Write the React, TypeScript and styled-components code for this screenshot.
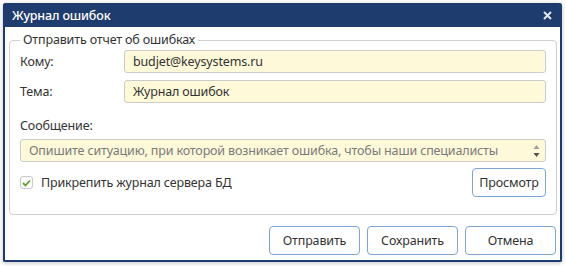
import React from "react";
import styled, { createGlobalStyle } from "styled-components";

const Global = createGlobalStyle`
  html, body { margin: 0; padding: 0; background: #ffffff; }
  body { font-family: "Noto Sans", "Open Sans", sans-serif; font-size: 12.5px; letter-spacing: -0.15px; color: #333; }
  * { box-sizing: border-box; }
`;

const Page = styled.div`
  padding: 3px 4px 4px 3px;
`;

const Window = styled.div`
  width: 559px;
  height: 259px;
  border: 2px solid #1f3c6e;
  border-top: none;
  border-radius: 3px 3px 2px 2px;
  box-shadow: 0 1px 4px rgba(0, 0, 0, 0.25);
  display: flex;
  flex-direction: column;
  background: #fff;
`;

const TitleBar = styled.div`
  height: 24px;
  background: #1f3c6e;
  color: #fff;
  display: flex;
  align-items: center;
  justify-content: space-between;
  padding: 0 10px 0 7px;
  margin: 0 -2px;
  border-radius: 3px 3px 0 0;
  font-size: 12.5px;
  font-weight: 500;
`;

const Title = styled.span`
  padding-left: 2px;
`;

const Close = styled.svg`
  width: 9px;
  height: 9px;
`;

const Body = styled.div`
  flex: 1;
  display: flex;
  flex-direction: column;
  padding: 5px 3px 5px 4px;
`;

const FieldSet = styled.fieldset`
  margin: 0;
  border: 1px solid #cfcfcf;
  border-radius: 4px;
  padding: 2px 10px 0 10px;
  height: 183px;
  display: flex;
  flex-direction: column;
`;

const Legend = styled.legend`
  padding: 0 3px;
  margin-left: 0px;
  color: #333;
  line-height: 16px;
`;

const Row = styled.div`
  display: grid;
  grid-template-columns: 104px 1fr;
  align-items: center;
  margin-bottom: 7px;
`;

const Label = styled.label`
  color: #333;
`;

const Input = styled.div<{ $placeholder?: boolean }>`
  height: 23px;
  background: #fef9d9;
  border: 1px solid #cccccc;
  border-radius: 3px;
  padding: 0 8px;
  display: flex;
  align-items: center;
  color: ${(p) => (p.$placeholder ? "#7a7a7a" : "#333")};
  position: relative;
  white-space: nowrap;
  overflow: hidden;
`;

const MsgLabel = styled.div`
  margin-top: 8px;
  margin-bottom: 5px;
  line-height: 16px;
`;

const Spinner = styled.svg`
  position: absolute;
  right: 5px;
  top: 4px;
  width: 7px;
  height: 14px;
`;

const CheckRow = styled.div`
  display: flex;
  align-items: center;
  justify-content: space-between;
  margin-top: 6px;
`;

const CheckLabel = styled.label`
  display: flex;
  align-items: center;
  gap: 8px;
  color: #333;
`;

const Box = styled.span`
  width: 13px;
  height: 13px;
  border: 1px solid #c8c8c8;
  border-radius: 3px;
  background: #fff;
  display: inline-flex;
  align-items: center;
  justify-content: center;
`;

const Button = styled.button<{ $w: number }>`
  width: ${(p) => p.$w}px;
  height: 29px;
  border: 1px solid #7ea5d3;
  border-radius: 4px;
  background: #fff;
  color: #333;
  font-family: inherit;
  font-size: 12.5px;
  letter-spacing: -0.15px;
  padding: 0;
`;

const Footer = styled.div`
  display: flex;
  justify-content: flex-end;
  gap: 7px;
  padding-right: 1px;
  margin-top: 11px;
`;

export default function App() {
  return (
    <>
      <Global />
      <Page>
        <Window>
          <TitleBar>
            <Title>Журнал ошибок</Title>
            <Close viewBox="0 0 9 9">
              <path d="M1 1 L8 8 M8 1 L1 8" stroke="#dfe6f0" strokeWidth="2" />
            </Close>
          </TitleBar>
          <Body>
            <FieldSet>
              <Legend>Отправить отчет об ошибках</Legend>
              <Row>
                <Label>Кому:</Label>
                <Input>budjet@keysystems.ru</Input>
              </Row>
              <Row>
                <Label>Тема:</Label>
                <Input>Журнал ошибок</Input>
              </Row>
              <MsgLabel>Сообщение:</MsgLabel>
              <Input $placeholder>
                Опишите ситуацию, при которой возникает ошибка, чтобы наши специалисты
                <Spinner viewBox="0 0 7 14">
                  <path d="M0.5 5 L3.5 1 L6.5 5 Z" fill="#a0a0a0" />
                  <path d="M0.5 9 L3.5 13 L6.5 9 Z" fill="#505050" />
                </Spinner>
              </Input>
              <CheckRow>
                <CheckLabel>
                  <Box>
                    <svg width="9" height="8" viewBox="0 0 9 8">
                      <path d="M1 4 L3.5 6.5 L8 1.5" fill="none" stroke="#5a9e2f" strokeWidth="1.8" />
                    </svg>
                  </Box>
                  Прикрепить журнал сервера БД
                </CheckLabel>
                <Button $w={74}>Просмотр</Button>
              </CheckRow>
            </FieldSet>
            <Footer>
              <Button $w={91}>Отправить</Button>
              <Button $w={91}>Сохранить</Button>
              <Button $w={91}>Отмена</Button>
            </Footer>
          </Body>
        </Window>
      </Page>
    </>
  );
}
